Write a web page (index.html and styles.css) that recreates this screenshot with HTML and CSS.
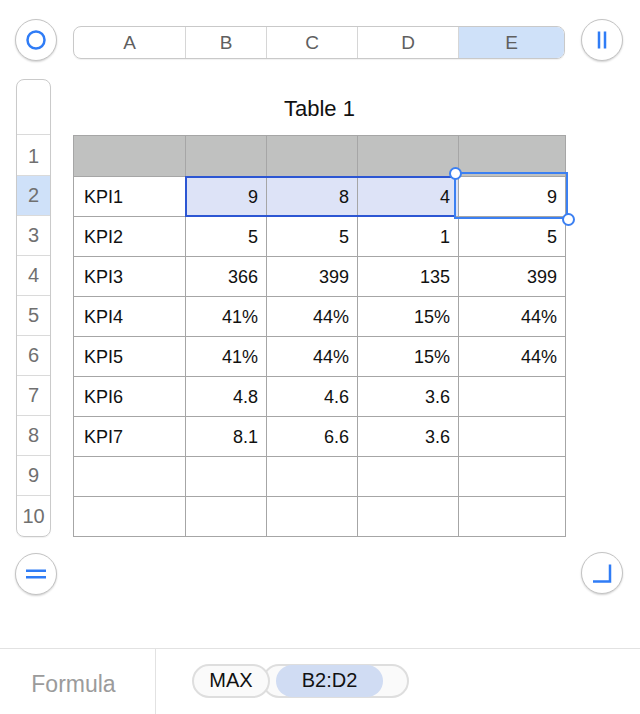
FILE: index.html
```html
<!DOCTYPE html>
<html>
<head>
<meta charset="utf-8">
<link rel="stylesheet" href="styles.css">
</head>
<body>
<div class="app">
  <div class="workspace">
    <button class="round tl">
      <svg width="40" height="40" viewBox="-20 -20 40 40"><circle cx="0" cy="0" r="8.5" fill="none" stroke="#2f7cf6" stroke-width="2.5"/></svg>
    </button>
    <div class="colbar">
      <div class="colh w1">A</div>
      <div class="colh w2">B</div>
      <div class="colh w3">C</div>
      <div class="colh w4">D</div>
      <div class="colh w5 sel">E</div>
    </div>
    <button class="round tr">
      <svg width="40" height="40" viewBox="-20 -20 40 40"><path d="M-3 -8.5V8.5M3 -8.5V8.5" stroke="#2f7cf6" stroke-width="2.5" fill="none"/></svg>
    </button>

    <div class="rowbar">
      <div class="rowh blank"></div>
      <div class="rowh first">1</div>
      <div class="rowh sel">2</div>
      <div class="rowh">3</div>
      <div class="rowh">4</div>
      <div class="rowh">5</div>
      <div class="rowh">6</div>
      <div class="rowh">7</div>
      <div class="rowh">8</div>
      <div class="rowh">9</div>
      <div class="rowh last">10</div>
    </div>

    <div class="main">
      <div class="title">Table 1</div>
      <div class="tablewrap">
        <div class="grid">
          <div class="c hd"></div><div class="c hd"></div><div class="c hd"></div><div class="c hd"></div><div class="c hd"></div>
          <div class="c l">KPI1</div><div class="c r s">9</div><div class="c r s">8</div><div class="c r s">4</div><div class="c r">9</div>
          <div class="c l">KPI2</div><div class="c r">5</div><div class="c r">5</div><div class="c r">1</div><div class="c r">5</div>
          <div class="c l">KPI3</div><div class="c r">366</div><div class="c r">399</div><div class="c r">135</div><div class="c r">399</div>
          <div class="c l">KPI4</div><div class="c r">41%</div><div class="c r">44%</div><div class="c r">15%</div><div class="c r">44%</div>
          <div class="c l">KPI5</div><div class="c r">41%</div><div class="c r">44%</div><div class="c r">15%</div><div class="c r">44%</div>
          <div class="c l">KPI6</div><div class="c r">4.8</div><div class="c r">4.6</div><div class="c r">3.6</div><div class="c r"></div>
          <div class="c l">KPI7</div><div class="c r">8.1</div><div class="c r">6.6</div><div class="c r">3.6</div><div class="c r"></div>
          <div class="c"></div><div class="c"></div><div class="c"></div><div class="c"></div><div class="c"></div>
          <div class="c"></div><div class="c"></div><div class="c"></div><div class="c"></div><div class="c"></div>
        </div>
        <div class="range"></div>
        <div class="target"></div>
        <div class="handle h1"></div>
        <div class="handle h2"></div>
      </div>
    </div>

    <button class="round bl">
      <svg width="40" height="40" viewBox="-20 -20 40 40"><path d="M-10 -3.2H10M-10 3.2H10" stroke="#2f7cf6" stroke-width="2.5" fill="none"/></svg>
    </button>
    <button class="round br">
      <svg width="40" height="40" viewBox="-20 -20 40 40"><path d="M8 -8.5V8.5H-9" stroke="#2f7cf6" stroke-width="2.5" fill="none"/></svg>
    </button>
  </div>

  <div class="formulabar">
    <div class="flabel">Formula</div>
    <div class="fbody">
      <span class="pill fn">MAX</span>
      <span class="args"><span class="pill ref">B2:D2</span></span>
    </div>
  </div>
</div>
</body>
</html>
```

FILE: styles.css
```css
* { box-sizing: border-box; }
html, body { margin: 0; padding: 0; background: #fff; }
body { font-family: "Liberation Sans", Arial, sans-serif; }

.app {
  width: 640px;
  height: 714px;
  display: flex;
  flex-direction: column;
  overflow: hidden;
}

.workspace {
  height: 648px;
  padding-top: 19px;
  display: grid;
  grid-template-columns: 15px 42px 16px 493px 15px 42px;
  grid-template-rows: 42px 476px 42px;
  align-items: start;
}

.round {
  width: 42px;
  height: 42px;
  border-radius: 50%;
  border: 1px solid #c4c4c4;
  background: #fff;
  box-shadow: 0 1px 2px rgba(0,0,0,0.18);
  padding: 0;
  display: flex;
  align-items: center;
  justify-content: center;
}
.tl { grid-column: 2; grid-row: 1; }
.tr { grid-column: 6; grid-row: 1; }
.bl { grid-column: 2; grid-row: 3; margin-top: 16px; }
.br { grid-column: 6; grid-row: 3; margin-top: 15px; }

.colbar {
  grid-column: 4;
  grid-row: 1;
  margin-top: 7px;
  width: 492px;
  height: 33px;
  border: 1px solid #c9c9c9;
  border-radius: 8px;
  display: flex;
  overflow: hidden;
  box-shadow: 0 1px 1px rgba(0,0,0,0.06);
}
.colh {
  height: 100%;
  display: flex;
  align-items: center;
  justify-content: center;
  font-size: 19px;
  color: #5f5f5f;
  border-right: 1px solid #d6d6d6;
}
.colh.w1 { width: 112px; }
.colh.w2 { width: 81px; }
.colh.w3 { width: 91px; }
.colh.w4 { width: 101px; }
.colh.w5 { flex: 1; border-right: none; }
.colh.sel { background: #cfe1f9; }

.rowbar {
  grid-column: 2;
  grid-row: 2;
  margin-top: 18px;
  margin-left: 1px;
  width: 35px;
  border: 1px solid #cacaca;
  border-radius: 8px;
  overflow: hidden;
  display: flex;
  flex-direction: column;
  box-shadow: 0 1px 1px rgba(0,0,0,0.06);
}
.rowh {
  height: 40px;
  border-bottom: 1px solid #dadada;
  display: flex;
  align-items: center;
  justify-content: center;
  font-size: 20px;
  color: #707070;
}
.rowh.blank { height: 55px; }
.rowh.first { height: 41px; padding-top: 2px; }
.rowh.last { height: 40px; border-bottom: none; }
.rowh.sel { background: #cfe1f9; }

.main {
  grid-column: 4;
  grid-row: 2;
  margin-top: 18px;
}
.title {
  height: 56px;
  display: flex;
  align-items: center;
  justify-content: center;
  font-size: 22px;
  color: #111;
  padding-top: 3px;
}

.tablewrap { position: relative; width: 493px; }
.grid {
  display: grid;
  grid-template-columns: 111px 80px 90px 100px 106px;
  grid-template-rows: 40px repeat(9, 39px);
  gap: 1px;
  padding: 1px;
  background: #a6a6a6;
}
.c {
  background: #fff;
  display: flex;
  align-items: center;
  padding-top: 2px;
  font-size: 18px;
  color: #111;
}
.c.hd { background: #c0c1c0; }
.c.l { padding-left: 10px; }
.c.r { justify-content: flex-end; padding-right: 8px; }
.c.s { background: #dde3f7; }

.range {
  position: absolute;
  left: 112px;
  top: 41px;
  width: 271px;
  height: 41px;
  border: 2px solid #2c56d3;
}
.target {
  position: absolute;
  left: 381px;
  top: 37px;
  width: 114px;
  height: 47px;
  border: 2px solid #3c80f2;
}
.handle {
  position: absolute;
  width: 13px;
  height: 13px;
  border-radius: 50%;
  background: #fff;
  border: 2px solid #3c80f2;
}
.handle.h1 { left: 375.5px; top: 31.5px; }
.handle.h2 { left: 488.5px; top: 77.5px; }

.formulabar {
  height: 66px;
  border-top: 1px solid #e2e2e2;
  display: flex;
}
.flabel {
  width: 156px;
  border-right: 1px solid #e2e2e2;
  display: flex;
  align-items: center;
  justify-content: center;
  padding-top: 6px;
  padding-right: 8px;
  font-size: 23px;
  color: #9b9b9b;
}
.fbody {
  display: flex;
  align-items: center;
  padding-left: 36px;
  padding-bottom: 2px;
}
.pill {
  display: inline-flex;
  align-items: center;
  justify-content: center;
  height: 34px;
  border-radius: 17px;
  font-size: 20px;
  color: #111;
}
.fn {
  width: 78px;
  border: 2px solid #dedede;
  background: #fafafa;
  position: relative;
  z-index: 1;
}
.args {
  display: inline-flex;
  align-items: center;
  height: 34px;
  width: 147px;
  margin-left: -8px;
  padding-left: 12px;
  border: 2px solid #dedede;
  border-radius: 17px;
  background: #fafafa;
}
.ref {
  width: 107px;
  height: 32px;
  background: #d0dcf3;
  border-radius: 16px;
}
```
